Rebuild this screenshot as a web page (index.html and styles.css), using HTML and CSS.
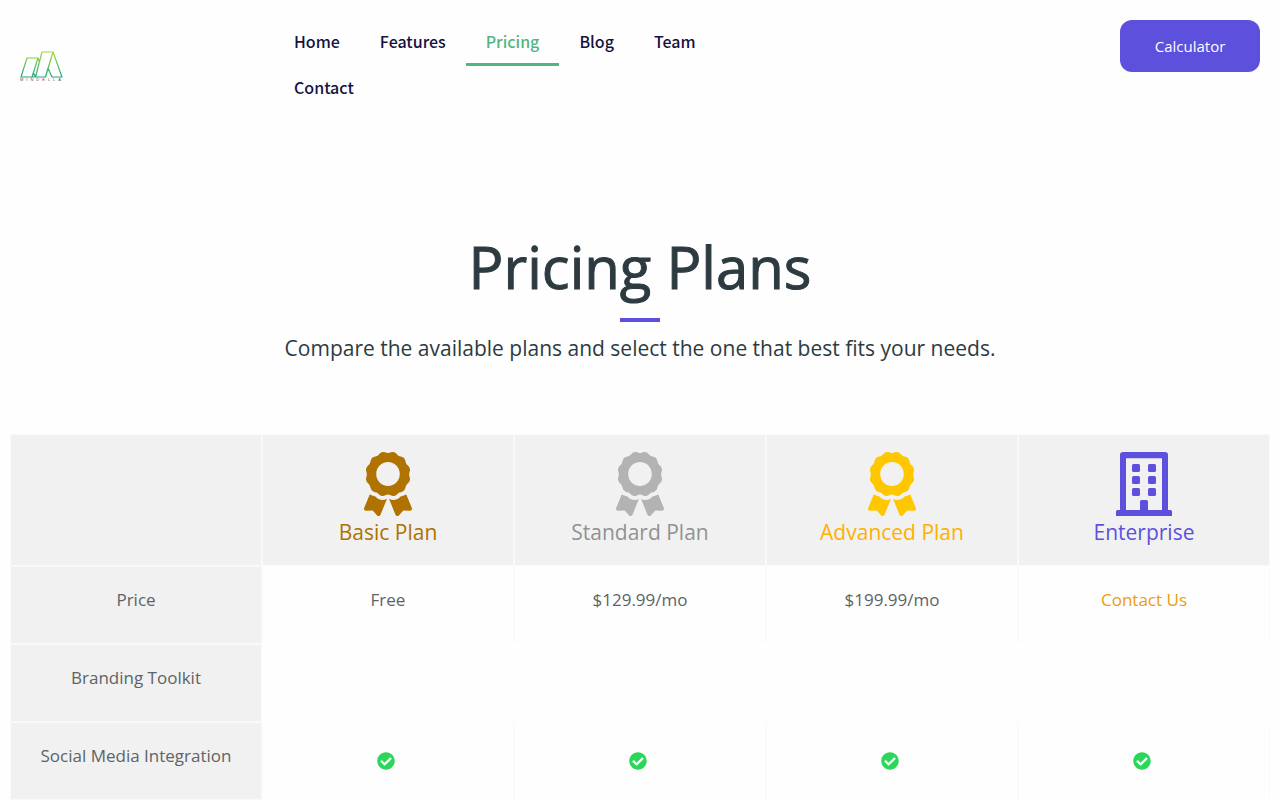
FILE: index.html
```html
<!DOCTYPE html>
<html lang="en">
<head>
	<meta charset="utf-8">
	<meta name="viewport" content="width=device-width, initial-scale=1">
	<title>Pricing Plans</title>
	<link rel="stylesheet" href="styles.css">
</head>
<body>
	<svg class="sprite" aria-hidden="true">
		<symbol id="award" viewBox="0 0 384 512">
			<path d="M97.12 362.63c-8.69-8.69-4.16-6.24-25.12-11.85-9.51-2.55-17.87-7.45-25.43-13.32L1.2 448.7c-4.39 10.77 3.81 22.47 15.43 22.03l52.69-2.01L105.56 507c8 8.44 22.04 5.81 26.43-4.96l52.05-127.62c-10.84 6.04-22.87 9.58-35.31 9.58-19.5 0-37.82-7.59-51.61-21.37zM382.8 448.7l-45.37-111.24c-7.56 5.88-15.92 10.77-25.43 13.32-21.07 5.64-16.45 3.18-25.12 11.85-13.79 13.78-32.12 21.37-51.62 21.37-12.44 0-24.47-3.55-35.31-9.58L252 502.04c4.39 10.77 18.44 13.4 26.43 4.96l36.25-38.28 52.69 2.01c11.62.44 19.82-11.27 15.43-22.03zM263 340c15.28-15.55 17.03-14.21 38.79-20.14 13.89-3.79 24.75-14.84 28.47-28.98 7.48-28.4 5.54-24.97 25.95-45.75 10.17-10.35 14.14-25.44 10.42-39.58-7.47-28.38-7.48-24.42 0-52.83 3.72-14.14-.25-29.23-10.42-39.58-20.41-20.78-18.47-17.36-25.95-45.75-3.72-14.14-14.58-25.19-28.47-28.98-27.88-7.61-24.52-5.62-44.95-26.41-10.17-10.35-25-14.4-38.89-10.61-27.87 7.6-23.98 7.61-51.9 0-13.89-3.79-28.72.25-38.89 10.61-20.41 20.78-17.05 18.8-44.94 26.41-13.89 3.79-24.75 14.84-28.47 28.98-7.47 28.39-5.54 24.97-25.95 45.75-10.17 10.35-14.15 25.44-10.42 39.58 7.47 28.36 7.48 24.4 0 52.82-3.72 14.14.25 29.23 10.42 39.59 20.41 20.78 18.47 17.35 25.95 45.75 3.72 14.14 14.58 25.19 28.47 28.98C104.6 325.96 106.27 325 121 340c13.23 13.47 33.84 15.88 49.74 5.82a39.676 39.676 0 0 1 42.53 0c15.89 10.06 36.5 7.65 49.73-5.82zM97.66 175.96c0-53.03 42.24-96.02 94.34-96.02s94.34 42.99 94.34 96.02-42.24 96.02-94.34 96.02-94.34-42.99-94.34-96.02z"/>
		</symbol>
		<symbol id="building" viewBox="0 0 448 512">
			<path fill-rule="evenodd" d="M56 0h336a24 24 0 0 1 24 24v440h20a12 12 0 0 1 12 12v36H0v-36a12 12 0 0 1 12-12h20V24A24 24 0 0 1 56 0zM80 49v415h112v-68a12 12 0 0 1 12-12h40a12 12 0 0 1 12 12v68h112V49z"/>
			<rect x="128" y="96" width="64" height="64" rx="12"/>
			<rect x="256" y="96" width="64" height="64" rx="12"/>
			<rect x="128" y="192" width="64" height="64" rx="12"/>
			<rect x="256" y="192" width="64" height="64" rx="12"/>
			<rect x="128" y="288" width="64" height="64" rx="12"/>
			<rect x="256" y="288" width="64" height="64" rx="12"/>
		</symbol>
		<symbol id="check" viewBox="0 0 512 512">
			<path d="M504 256c0 136.967-111.033 248-248 248S8 392.967 8 256 119.033 8 256 8s248 111.033 248 248zM227.314 387.314l184-184c6.248-6.248 6.248-16.379 0-22.627l-22.627-22.627c-6.248-6.248-16.379-6.249-22.628 0L216 308.118l-70.059-70.059c-6.248-6.248-16.379-6.248-22.628 0l-22.627 22.627c-6.248 6.248-6.248 16.379 0 22.627l104 104c6.249 6.249 16.379 6.249 22.628.001z"/>
		</symbol>
	</svg>

	<header class="header">
		<a class="logo" href="#" aria-label="Mindella">
			<svg viewBox="0 0 44 32" width="44" height="32">
				<defs>
					<linearGradient id="leaf" gradientUnits="userSpaceOnUse" x1="0" y1="1" x2="0" y2="27">
						<stop offset="0" stop-color="#a8dc2c"/>
						<stop offset="1" stop-color="#1fa884"/>
					</linearGradient>
				</defs>
				<path fill="none" stroke="url(#leaf)" stroke-width="1.2" stroke-linejoin="round" d="M1 27L7 8h11l-6 19zM12 27l1.500-4 2 4zM15.500 27L22 2h11l-7.500 25zM25.500 27L28 18l4 9h10L33 2M18 8l1.500 4"/>
				<text class="logo-text" x="0" y="31">MINDELLA</text>
			</svg>
		</a>
		<nav class="nav">
			<a href="#">Home</a>
			<a href="#">Features</a>
			<a class="active" href="#">Pricing</a>
			<a href="#">Blog</a>
			<a href="#">Team</a>
			<a href="#">Contact</a>
		</nav>
		<a class="button" href="#">Calculator</a>
	</header>

	<main>
		<section class="intro">
			<h1>Pricing Plans</h1>
			<hr class="divider">
			<p>Compare the available plans and select the one that best fits your needs.</p>
		</section>

		<table class="plans">
			<thead>
				<tr>
					<td></td>
					<th class="basic" scope="col"><svg class="icon"><use href="#award"/></svg>Basic Plan</th>
					<th class="standard" scope="col"><svg class="icon"><use href="#award"/></svg>Standard Plan</th>
					<th class="advanced" scope="col"><svg class="icon"><use href="#award"/></svg>Advanced Plan</th>
					<th class="enterprise" scope="col"><svg class="icon"><use href="#building"/></svg>Enterprise</th>
				</tr>
			</thead>
			<tbody>
				<tr>
					<th scope="row">Price</th>
					<td>Free</td>
					<td>$129.99/mo</td>
					<td>$199.99/mo</td>
					<td><a class="contact" href="#">Contact Us</a></td>
				</tr>
				<tr>
					<th scope="row">Branding Toolkit</th>
					<td class="empty" colspan="4"></td>
				</tr>
				<tr class="included">
					<th scope="row">Social Media Integration</th>
					<td><svg class="check" role="img" aria-label="Included"><use href="#check"/></svg></td>
					<td><svg class="check" role="img" aria-label="Included"><use href="#check"/></svg></td>
					<td><svg class="check" role="img" aria-label="Included"><use href="#check"/></svg></td>
					<td><svg class="check" role="img" aria-label="Included"><use href="#check"/></svg></td>
				</tr>
			</tbody>
		</table>
	</main>
</body>
</html>
```
FILE: styles.css
```css
* {
	box-sizing: border-box;
}

body {
	margin: 0;
	background: #fefefe;
	color: #2d3b41;
	font-family: "Open Sans", "Noto Sans", sans-serif;
}

a {
	text-decoration: none;
}

.sprite {
	display: none;
}

.header {
	display: grid;
	grid-template-columns: 20% 40% 1fr;
	column-gap: 6px;
	align-items: start;
	padding: 20px;
}

.logo {
	align-self: center;
}

.logo svg {
	display: block;
}

.logo-text {
	font: 4px "Liberation Sans", sans-serif;
	letter-spacing: 3px;
	fill: #555;
}

.nav {
	display: flex;
	flex-wrap: wrap;
}

.nav a {
	padding: 10px 20px;
	border-bottom: 3px solid transparent;
	color: #15123f;
	font: 500 16px/23px "Noto Sans CJK SC", sans-serif;
}

.nav .active {
	border-color: #54b57e;
	color: #54b57e;
}

.button {
	justify-self: end;
	width: 140px;
	border-radius: 12px;
	background: #5c50dd;
	color: #fff;
	font-size: 15px;
	line-height: 52px;
	text-align: center;
}

.intro {
	padding: 100px 20px 70px;
	text-align: center;
}

.intro h1 {
	margin: 0;
	font-size: 58px;
	font-weight: 400;
	line-height: 70px;
	-webkit-text-stroke: 1px;
}

.divider {
	width: 40px;
	height: 4px;
	margin: 16px auto 10px;
	border: 0;
	background: #5c50dd;
}

.intro p {
	margin: 0;
	font-size: 21px;
	line-height: 32px;
}

.plans {
	width: calc(100% - 20px);
	margin: 0 10px;
	border-spacing: 0;
	table-layout: fixed;
	color: #5d6368;
	font-size: 17px;
	line-height: 28px;
	text-align: center;
}

.plans th,
.plans td {
	height: 78px;
	padding: 19px 0;
	border: 1px solid #f9f9f9;
	font-weight: 400;
	vertical-align: top;
}

.plans th,
.plans thead td {
	background: #f1f1f1;
}

.plans tbody td {
	border-color: #fefefe #fafafa;
}

.plans .empty {
	border-color: transparent;
}

.plans thead th {
	height: 132px;
	padding: 17px 0;
	font-size: 21px;
	line-height: 32px;
}

.plans .included td {
	padding-right: 5px;
}

.icon {
	display: block;
	width: 56px;
	height: 64px;
	margin: 0 auto;
	fill: currentColor;
}

.check {
	display: block;
	width: 18px;
	height: 18px;
	margin: 10px auto;
	fill: #2bd65b;
}

.basic {
	color: #b07200;
}

.standard {
	color: #929292;
}

.standard .icon {
	fill: #b3b3b3;
}

.advanced {
	color: #ffb000;
}

.advanced .icon {
	fill: #ffc700;
}

.enterprise {
	color: #5c50dd;
}

.contact {
	color: #eb9c0c;
}
```
